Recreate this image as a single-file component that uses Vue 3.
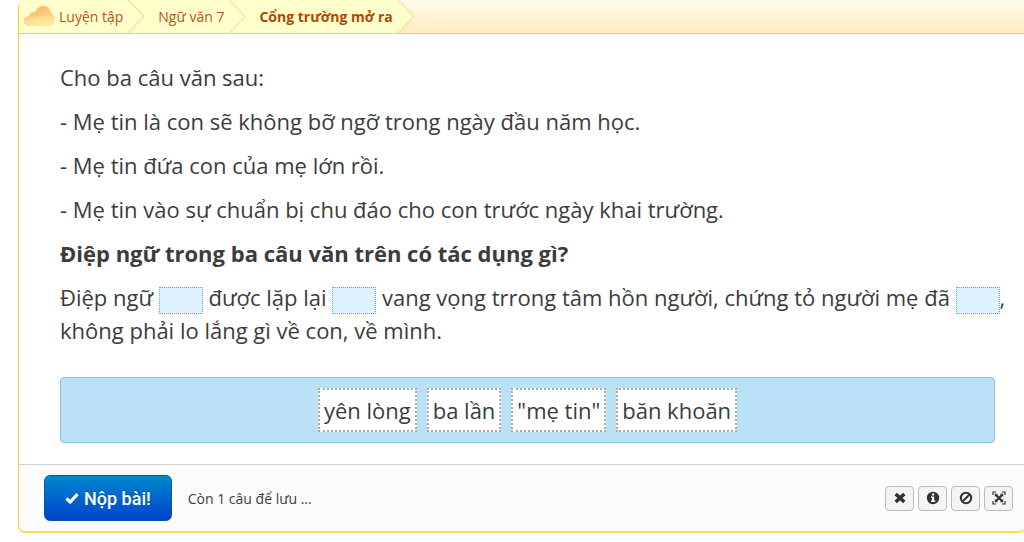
<script setup>
import { ref } from "vue";

const crumbs = ["Luyện tập", "Ngữ văn 7", "Cổng trường mở ra"];

const lines = [
    "Cho ba câu văn sau:",
    "- Mẹ tin là con sẽ không bỡ ngỡ trong ngày đầu năm học.",
    "- Mẹ tin đứa con của mẹ lớn rồi.",
    "- Mẹ tin vào sự chuẩn bị chu đáo cho con trước ngày khai trường.",
];

const words = ["yên lòng", "ba lần", '"mẹ tin"', "băn khoăn"];
const answers = ref(["", "", ""]);

const fillNext = (word) => {
    const i = answers.value.findIndex((a) => !a);
    if (i > -1) {
        answers.value[i] = word;
    }
};

const clearAnswers = () => {
    answers.value = ["", "", ""];
};
</script>

<template>
    <main class="panel">
        <nav class="crumbs">
            <svg class="cloud" viewBox="0 0 32 22">
                <defs>
                    <linearGradient id="cloudFill" x1="0" y1="0" x2="0.3" y2="1">
                        <stop offset="0" stop-color="#ffb268" />
                        <stop offset="0.6" stop-color="#ffcb7c" />
                        <stop offset="1" stop-color="#ffe9a0" />
                    </linearGradient>
                </defs>
                <path
                    d="M7 20.500C3 20.500 1 18.500 1 16C1 13 3.500 11.500 6 11.300C6 8.500 9 6.500 12 7.500C13.500 3.500 17 1 20.500 1C24.500 1 27 3.500 27.500 7.500C30 8.500 31.500 11.500 31.500 14.500C31.500 18 29 20.500 25.500 20.500Z"
                    fill="url(#cloudFill)"
                    stroke="#fbd796"
                    stroke-width="0.6"
                />
                <path
                    d="M2 17C5 11 11 12 14 14C18 9 24 12 31 8.500C32 16 31 20 25.500 20H7C4 20 2.500 19 2 17Z"
                    fill="#fff0a8"
                    fill-opacity="0.3"
                />
            </svg>
            <a
                v-for="(crumb, i) in crumbs"
                :key="crumb"
                href="#"
                :class="{ current: i === crumbs.length - 1 }"
            >
                <span>{{ crumb }}</span>
                <svg class="arrow" viewBox="0 0 17 33" preserveAspectRatio="none">
                    <path class="arrow-fill" d="M0 0L16 16.500L0 33Z" />
                    <path class="arrow-line" d="M0 0L16 16.500L0 33" />
                </svg>
            </a>
        </nav>

        <section class="question">
            <p v-for="line in lines" :key="line">{{ line }}</p>
            <p><strong>Điệp ngữ trong ba câu văn trên có tác dụng gì?</strong></p>
            <p>
                Điệp ngữ
                <input v-model="answers[0]" class="blank" aria-label="Ô trống 1" />
                được lặp lại
                <input v-model="answers[1]" class="blank" aria-label="Ô trống 2" />
                vang vọng trrong tâm hồn người, chứng tỏ người mẹ đã
                <span class="nowrap"
                    ><input
                        v-model="answers[2]"
                        class="blank"
                        aria-label="Ô trống 3"
                    />,</span
                >
                không phải lo lắng gì về con, về mình.
            </p>
            <div class="bank">
                <button
                    v-for="word in words"
                    :key="word"
                    type="button"
                    class="word"
                    @click="fillNext(word)"
                >
                    {{ word }}
                </button>
            </div>
        </section>

        <footer>
            <button type="button" class="submit">
                <svg viewBox="0 0 14 12">
                    <path
                        d="M1.500 6.500L5.200 10L12.500 2.200"
                        fill="none"
                        stroke="#fff"
                        stroke-width="3.2"
                    />
                </svg>
                Nộp bài!
            </button>
            <span class="status">Còn 1 câu để lưu ...</span>
            <div class="tools">
                <button type="button" aria-label="Xóa" @click="clearAnswers">
                    <svg viewBox="0 0 14 14">
                        <path
                            d="M2.700 3L11.300 11M11.300 3L2.700 11"
                            stroke="#333"
                            stroke-width="3.6"
                        />
                    </svg>
                </button>
                <button type="button" aria-label="Thông tin">
                    <svg viewBox="0 0 14 14">
                        <circle cx="7" cy="7" r="6.200" fill="#333" />
                        <path
                            d="M6 2.500H8.200V4.400H6ZM5 5.600H8.200V9.600H9.200V11H5V9.600H6V7H5Z"
                            fill="#fff"
                        />
                    </svg>
                </button>
                <button type="button" aria-label="Bỏ qua">
                    <svg viewBox="0 0 14 14">
                        <circle
                            cx="7"
                            cy="7"
                            r="5.200"
                            fill="none"
                            stroke="#333"
                            stroke-width="2"
                        />
                        <path d="M3.500 10.500L10.500 3.500" stroke="#333" stroke-width="2" />
                    </svg>
                </button>
                <button type="button" aria-label="Toàn màn hình">
                    <svg viewBox="0 0 14 14">
                        <path
                            d="M1 4V1H4M10 1H13V4M13 10V13H10M4 13H1V10"
                            fill="none"
                            stroke="#333"
                            stroke-width="1.2"
                        />
                        <path
                            d="M4 4L10 10M10 4L4 10"
                            stroke="#333"
                            stroke-width="2.2"
                        />
                        <path
                            d="M2.800 2.800H6L2.800 6ZM11.200 2.800V6L8 2.800ZM11.200 11.200H8L11.200 8ZM2.800 11.200V8L6 11.200Z"
                            fill="#333"
                        />
                    </svg>
                </button>
            </div>
        </footer>
    </main>
</template>

<style>
body {
    background: #fff;
    overflow-x: hidden;
}
</style>

<style scoped>
/* the right border runs just past the window edge */
.panel {
    margin-left: 18px;
    margin-right: -2px;
    border: 1px solid #ffcc33;
    border-top: 0;
    border-bottom: 2px solid #ffdb5c;
    border-radius: 7px;
    overflow: hidden;
    box-shadow: 0 1px 3px rgba(0, 0, 0, 0.05);
    font-family: "Open Sans", "Noto Sans", sans-serif;
    font-size: 22px;
    line-height: 33px;
    color: #3c3c3c;
}

.crumbs {
    display: flex;
    height: 33px;
    border-bottom: 1px solid #ffcc33;
    background: linear-gradient(#fffbec, #ffedc0);
    font-size: 14px;
}

.cloud {
    width: 32px;
    height: 22px;
    flex: none;
    padding: 5px 4px 6px;
    background: #ffffcc;
}

.crumbs a {
    display: flex;
    color: #b9541a;
    text-decoration: none;
}

.crumbs a span {
    padding-right: 5px;
    background: #ffffcc;
}

.crumbs a + a span {
    padding-left: 30px;
    margin-left: -17px;
}

.crumbs a.current {
    font-weight: bold;
    color: #b34700;
}

.arrow {
    position: relative;
    width: 17px;
    height: 33px;
}

.arrow-fill {
    fill: #ffffcc;
}

.arrow-line {
    fill: none;
    stroke: #ffdfa8;
    stroke-width: 1.5;
}

.question {
    padding: 27px 12px 21px 41px;
}

p {
    margin: 0 0 11px;
}

.nowrap {
    white-space: nowrap;
}

.blank {
    box-sizing: border-box;
    width: 44px;
    height: 27px;
    padding: 0 2px;
    border: 1px dotted #55aede;
    background: #dff3ff;
    vertical-align: middle;
    font: inherit;
    font-size: 14px;
}

.bank {
    display: flex;
    justify-content: center;
    gap: 10px;
    margin: 30px 18px 0 0;
    padding: 10px;
    border: 1px solid #8fc1dc;
    border-radius: 4px;
    background: #bae1f6;
}

.word {
    padding: 4px;
    border: 2px dotted #aaa;
    background: #fff;
    color: #3c3c3c;
    font: inherit;
    line-height: 32px;
}

footer {
    display: flex;
    align-items: center;
    gap: 16px;
    padding: 10px 12px 10px 25px;
    border-top: 1px solid #d0d0d0;
    background: #fcfcfc;
    font-size: 14px;
}

.submit {
    display: flex;
    align-items: center;
    justify-content: center;
    gap: 5px;
    height: 46px;
    padding: 0 20px;
    border: 1px solid #0a50b0;
    border-radius: 6px;
    background: linear-gradient(#0088cc, #0044cc);
    color: #fff;
    font-family: Roboto, sans-serif;
    font-size: 18px;
    font-weight: 500;
    text-shadow: 0 -1px 0 rgba(0, 0, 0, 0.25);
}

.submit svg {
    width: 14px;
    height: 12px;
}

.tools {
    display: flex;
    gap: 4px;
    margin-left: auto;
}

.tools button {
    display: flex;
    align-items: center;
    justify-content: center;
    width: 29px;
    height: 25px;
    padding: 0;
    border: 1px solid #bbb;
    border-radius: 4px;
    background: #f4f4f4;
}

.tools svg {
    width: 14px;
    height: 14px;
}
</style>
